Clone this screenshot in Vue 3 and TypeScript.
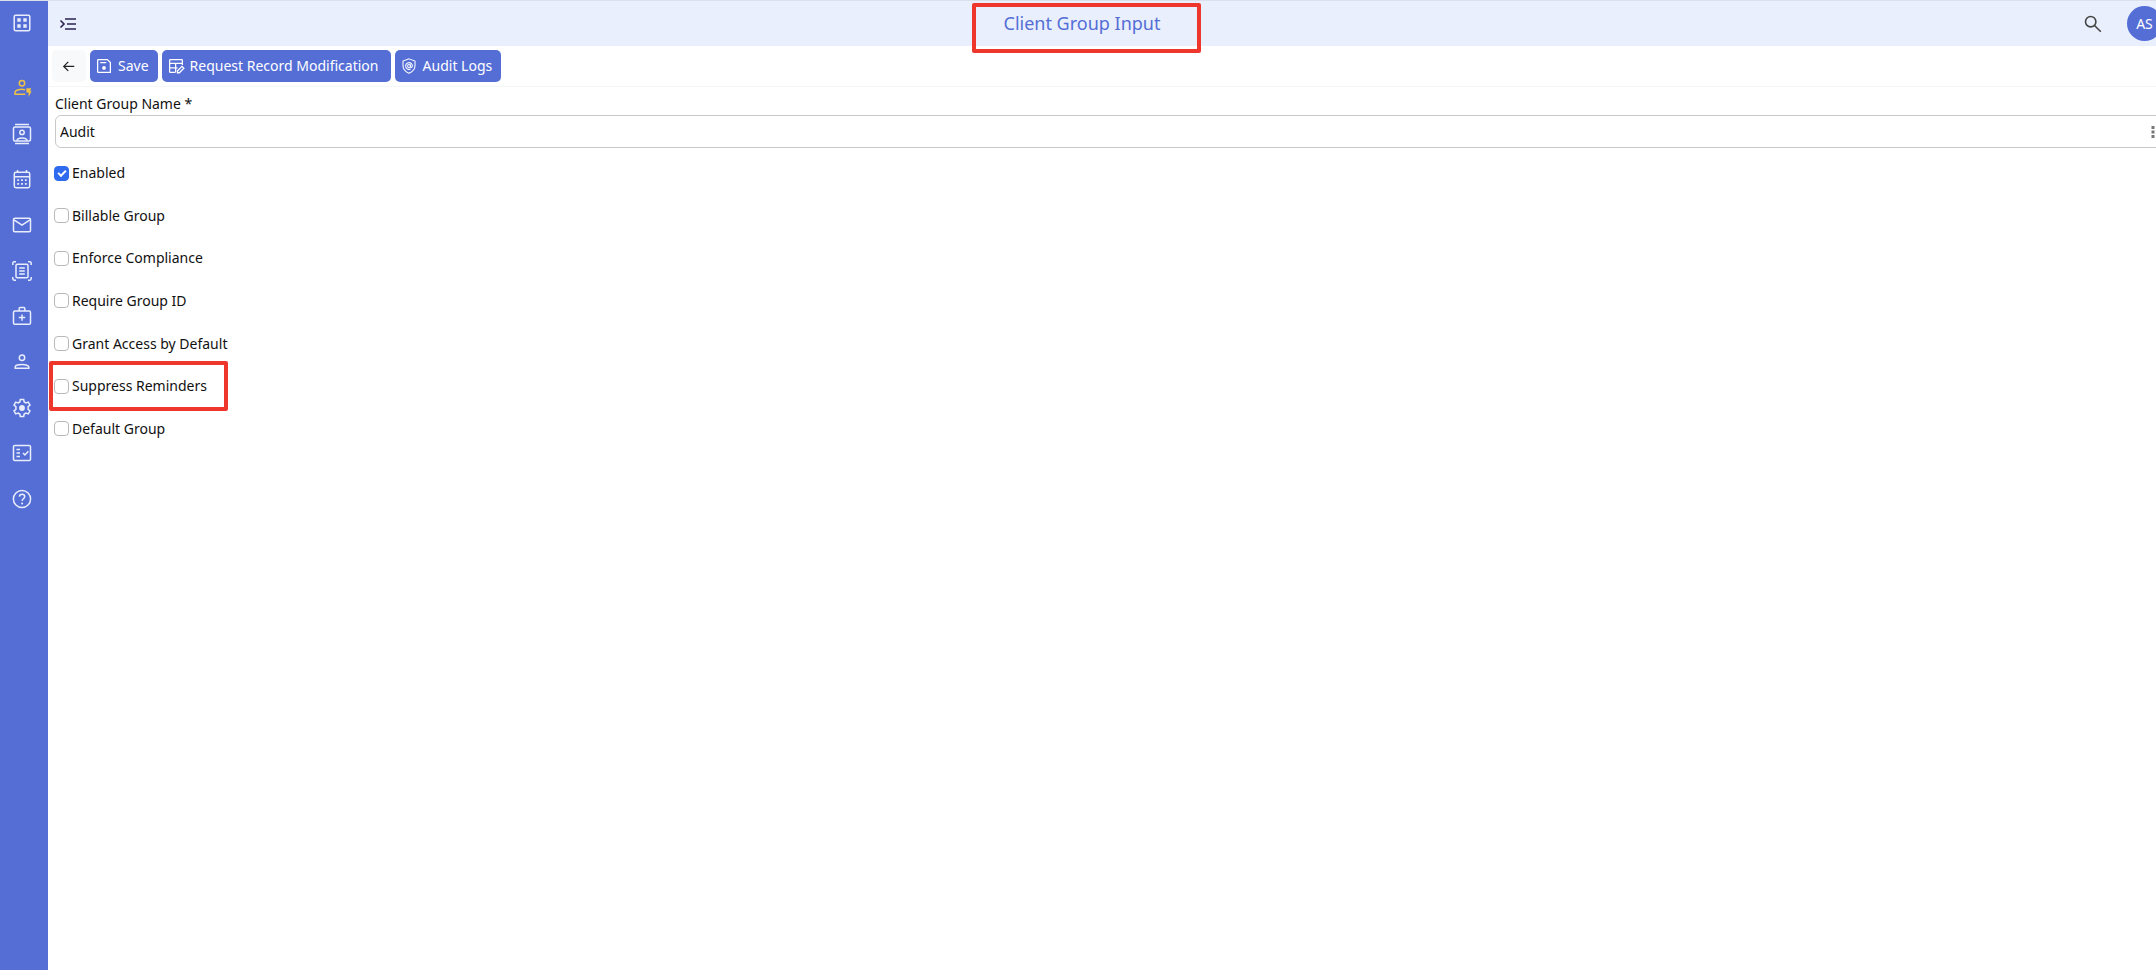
<script setup lang="ts">
import { reactive, ref } from 'vue'

interface NavItem {
  label: string
  icon: string
  accent?: boolean
}

interface Option {
  id: string
  label: string
  checked: boolean
  marked?: boolean
}

const navItems: NavItem[] = [
  { label: 'Quick client', icon: 'bolt', accent: true },
  { label: 'Contacts', icon: 'contacts' },
  { label: 'Calendar', icon: 'calendar' },
  { label: 'Messages', icon: 'mail' },
  { label: 'Documents', icon: 'scan' },
  { label: 'Services', icon: 'medical' },
  { label: 'People', icon: 'person' },
  { label: 'Settings', icon: 'gear' },
  { label: 'Checklists', icon: 'checklist' },
  { label: 'Help', icon: 'help' },
]

const groupName = ref('Audit')

const options = reactive<Option[]>([
  { id: 'enabled', label: 'Enabled', checked: true },
  { id: 'billable', label: 'Billable Group', checked: false },
  { id: 'compliance', label: 'Enforce Compliance', checked: false },
  { id: 'require-id', label: 'Require Group ID', checked: false },
  { id: 'grant-access', label: 'Grant Access by Default', checked: false },
  { id: 'suppress', label: 'Suppress Reminders', checked: false, marked: true },
  { id: 'default-group', label: 'Default Group', checked: false },
])
</script>

<template>
  <div class="app">
    <aside class="sidebar">
      <button class="nav-btn" type="button" aria-label="Apps">
        <svg class="icon" viewBox="0 0 24 24">
          <rect x="4.2" y="4.2" width="15.6" height="15.6" rx="1.5" />
          <path class="fill" d="M7.3 7.3h3.4v3.4H7.3zM13.3 7.3h3.4v3.4h-3.4zM7.3 13.3h3.4v3.4H7.3zM13.3 13.3h3.4v3.4h-3.4z" />
        </svg>
      </button>
      <nav class="nav">
        <a
          v-for="item in navItems"
          :key="item.icon"
          href="#"
          class="nav-btn"
          :class="{ accent: item.accent }"
          :aria-label="item.label"
        >
          <svg class="icon" viewBox="0 0 24 24">
            <template v-if="item.icon === 'bolt'">
              <circle cx="12" cy="7.3" r="2.7" />
              <path d="M15 13.8c-4-1-10-.2-10 2.8v1.6h10.3" />
              <path class="fill" d="M16.4 12.2h4.8l-1 3h1.4l-3 5.8v-4.400h-2.200z" />
            </template>
            <template v-else-if="item.icon === 'contacts'">
              <rect x="3.5" y="5" width="17" height="14" rx="1.5" />
              <path d="M5 2.6h14M5 21.4h14" />
              <circle cx="12" cy="10.4" r="2.2" />
              <path d="M6.8 18.6c1-3.4 9.4-3.4 10.4 0" />
            </template>
            <template v-else-if="item.icon === 'calendar'">
              <rect x="4.3" y="5.3" width="15.4" height="15.4" rx="1.6" />
              <path d="M4.3 9.8h15.4M7.5 3v2.5M16.5 3v2.5" />
              <path class="fill" d="M7.3 12.2h1.8V14H7.3zM11.1 12.2h1.8V14h-1.8zM14.9 12.2h1.8V14h-1.8zM7.3 16h1.8v1.8H7.3zM11.1 16h1.8v1.8h-1.8zM14.9 16h1.8v1.8h-1.8z" />
            </template>
            <template v-else-if="item.icon === 'mail'">
              <rect x="3.5" y="5.2" width="17" height="13.6" rx="1.3" />
              <path d="M4 6.8l8 5.4 8-5.4" />
            </template>
            <template v-else-if="item.icon === 'scan'">
              <rect x="6" y="5.2" width="12" height="13.6" rx="1.3" />
              <path d="M9.2 9h5.6M9.2 12h5.6M9.2 15h5.6" />
              <path d="M2.8 6V4.2q0-1.4 1.4-1.4H6M18 2.8h1.8q1.4 0 1.4 1.4V6M21.2 18v1.8q0 1.4-1.4 1.4H18M6 21.2H4.2q-1.4 0-1.4-1.4V18" />
            </template>
            <template v-else-if="item.icon === 'medical'">
              <rect x="3.5" y="7" width="17" height="13.3" rx="1.4" />
              <path d="M9.2 7V4.3q0-.8.8-.8h4q.8 0 .8.8V7M12 10.4v6.4M8.8 13.6h6.4" />
            </template>
            <template v-else-if="item.icon === 'person'">
              <circle cx="12" cy="7.8" r="2.7" />
              <path d="M5.2 18.3v-1.2c0-3.4 13.6-3.4 13.6 0v1.2z" />
            </template>
            <template v-else-if="item.icon === 'gear'">
              <path d="M10.3 3.5h3.4l.5 2.5 1.700 1 2.400-.9 1.700 3-1.900 1.600v2.600l1.900 1.600-1.700 3-2.400-.9-1.700 1-.5 2.500h-3.400l-.5-2.500-1.700-1-2.400.9-1.700-3 1.900-1.600v-2.600L4 9.100l1.700-3 2.400.9 1.700-1z" />
              <circle class="fill" cx="12" cy="12" r="2.9" />
            </template>
            <template v-else-if="item.icon === 'checklist'">
              <rect x="3.5" y="4.500" width="17" height="15" rx="1.3" />
              <path d="M6.5 8.5h3.5M6.5 12h3.5M6.5 15.5h3.5M13 12l1.9 1.9 3.5-3.7" />
            </template>
            <template v-else>
              <circle cx="12" cy="12" r="8.6" />
              <path d="M9.4 9.6c.2-3.3 5.3-3.2 5.3 0 0 2.1-2.5 2.2-2.6 4.3" />
              <circle class="fill" cx="12.1" cy="16.5" r="1" />
            </template>
          </svg>
        </a>
      </nav>
    </aside>

    <div class="main">
      <header class="header">
        <button class="plain-btn menu" type="button" aria-label="Expand menu">
          <svg viewBox="0 0 20 20">
            <path d="M2.5 6.5L6 10l-3.500 3.500M7 5h11M9 10h9M7 15h11" />
          </svg>
        </button>
        <h1 class="title"><span class="title-text">Client Group Input</span></h1>
        <button class="plain-btn search" type="button" aria-label="Search">
          <svg viewBox="0 0 20 20">
            <circle cx="7.7" cy="7.7" r="5.2" />
            <path d="M11.5 11.5l6.300 6.300" />
          </svg>
        </button>
        <button class="avatar" type="button">AS</button>
      </header>

      <div class="toolbar">
        <button class="btn back" type="button" aria-label="Back">
          <svg class="btn-icon" viewBox="0 0 24 24"><path d="M19 12.500H5.500M11 6.500l-6 6 6 6" /></svg>
        </button>
        <button class="btn" type="button">
          <svg class="btn-icon" viewBox="0 0 24 24">
            <path d="M4.5 3.5h12l4 4v13h-16q-1 0-1-1v-15q0-1 1-1zM7 7.5h8" />
            <circle class="fill" cx="12" cy="14.5" r="2.5" />
          </svg>
          Save
        </button>
        <button class="btn wide" type="button">
          <svg class="btn-icon" viewBox="0 0 24 24">
            <path d="M20.5 10.5v-6q0-1-1-1h-15q-1 0-1 1v15q0 1 1 1H11M3.5 8.500h17M3.500 14.500H14M11.500 8.500v12M14 21v-2.500l6-6 2.500 2.500-6 6z" />
          </svg>
          Request Record Modification
        </button>
        <button class="btn" type="button">
          <svg class="btn-icon shield" viewBox="0 0 24 24">
            <path d="M12 2.500l8 3v6.300c0 4.700-3.300 8-8 9.900-4.700-1.900-8-5.200-8-9.900V5.500z" />
            <circle cx="12" cy="12" r="1.900" />
            <path d="M14 10v2.500c0 2 2.500 1.800 2.500-.5a4.500 4.500 0 1 0-2.300 3.900" />
          </svg>
          Audit Logs
        </button>
      </div>

      <form class="form" @submit.prevent>
        <label class="field-label" for="group-name">Client Group Name *</label>
        <div class="field">
          <input id="group-name" v-model="groupName" class="field-input" type="text" />
          <svg class="field-dots" viewBox="0 0 4 12"><path d="M.5 0h3v3h-3zM.5 4.5h3v3h-3zM.5 9h3v3h-3z" /></svg>
        </div>
        <div class="options">
          <label v-for="o in options" :key="o.id" class="option" :class="{ marked: o.marked }" :for="o.id">
            <input :id="o.id" v-model="o.checked" class="check" type="checkbox" />
            {{ o.label }}
          </label>
        </div>
      </form>
    </div>
  </div>
</template>

<style>
body {
  margin: 0;
}
</style>

<style scoped>
.app {
  display: flex;
  min-height: 100vh;
  box-sizing: border-box;
  border-top: 1px solid #dce0ea;
  background: #fff;
  color: #111;
  font-family: "Noto Sans", "Open Sans", sans-serif;
  font-size: 14px;
  line-height: 20px;
  overflow: hidden;
}

button {
  font: inherit;
  cursor: pointer;
}

svg {
  display: block;
  fill: none;
  stroke: currentColor;
}

.fill {
  fill: currentColor;
  stroke: none;
}

.sidebar {
  flex: 0 0 48px;
  box-sizing: border-box;
  padding: 10px 0 0 10px;
  background: #546ed6;
}

.nav-btn {
  display: block;
  width: 24px;
  height: 24px;
  padding: 0;
  border: 0;
  background: none;
  color: #e9edfb;
}

.nav-btn.accent {
  color: #f0c244;
}

.icon {
  width: 24px;
  height: 24px;
  stroke-width: 1.5;
}

.nav {
  display: flex;
  flex-direction: column;
  justify-content: space-between;
  height: 435px;
  margin-top: 41px;
}

.main {
  flex: 1;
  min-width: 0;
}

.header {
  display: flex;
  align-items: center;
  height: 45px;
  padding-left: 10px;
  background: #e9effc;
}

.plain-btn {
  padding: 0;
  border: 0;
  background: none;
}

.plain-btn svg {
  width: 20px;
  height: 20px;
}

.menu {
  color: #2a2350;
}

.menu svg {
  stroke-width: 1.6;
}

.search {
  color: #444;
}

.search svg {
  stroke-width: 1.6;
}

.title {
  flex: 1;
  margin: 0;
  padding: 0 0 2px 3px;
  text-align: center;
  color: #546ed6;
  font-size: 18px;
  font-weight: 400;
  line-height: 24px;
}

.title-text {
  position: relative;
}

.title-text::after,
.option.marked::after {
  content: "";
  position: absolute;
  box-sizing: border-box;
  border: 4px solid #ee362c;
  border-radius: 2px;
  pointer-events: none;
}

.title-text::after {
  inset: -8px -41px -18px -32px;
}

.avatar {
  flex: none;
  width: 35px;
  height: 35px;
  margin: 0 -6px 0 24px;
  padding: 0;
  border: 0;
  border-radius: 50%;
  background: #546ed6;
  color: #fff;
}

.toolbar {
  display: flex;
  gap: 4px;
  padding: 4px;
  border-bottom: 1px solid #f6f6f7;
}

.btn {
  display: flex;
  align-items: center;
  gap: 5px;
  height: 32px;
  padding: 0 9px 0 5px;
  border: 0;
  border-radius: 5px;
  background: #546ed6;
  color: #fff;
  white-space: nowrap;
}

.btn.back {
  width: 34px;
  padding: 0 8px;
  background: #f8f9fa;
  color: #222;
}

.btn.wide {
  min-width: 229px;
}

.btn-icon {
  flex: none;
  width: 18px;
  height: 18px;
  stroke-width: 1.7;
}

.btn-icon.shield {
  stroke-width: 1.4;
}

.form {
  padding: 7px 0 0 7px;
}

.field-label {
  display: block;
}

.field {
  display: flex;
  align-items: center;
  box-sizing: border-box;
  height: 33px;
  margin: 1px -8px 0 0;
  padding: 0 8px 0 4px;
  border: 1px solid #c9c9c9;
  border-radius: 6px;
}

.field-input {
  flex: 1;
  min-width: 0;
  padding: 0;
  border: 0;
  outline: 0;
  background: none;
  color: inherit;
  font: inherit;
}

.field-dots {
  width: 4px;
  height: 12px;
  fill: #777;
  stroke: none;
}

.options {
  display: flex;
  flex-direction: column;
  align-items: flex-start;
  justify-content: space-between;
  height: 280px;
  margin-top: 13px;
}

.option {
  position: relative;
  display: flex;
  align-items: center;
  gap: 3px;
  height: 24px;
  margin-left: -1px;
}

.option.marked::after {
  inset: -13px -21px -13px -5px;
}

.check {
  display: grid;
  place-items: center;
  box-sizing: border-box;
  width: 15px;
  height: 15px;
  margin: 0;
  border: 1px solid #b9b9b9;
  border-radius: 4px;
  appearance: none;
  background: #fff;
}

.check:checked {
  border-color: #2f6bee;
  background: #2f6bee;
}

.check:checked::after {
  content: "";
  box-sizing: border-box;
  width: 8px;
  height: 5px;
  margin-bottom: 2px;
  border: solid #fff;
  border-width: 0 0 2px 2px;
  transform: rotate(-45deg);
}
</style>
